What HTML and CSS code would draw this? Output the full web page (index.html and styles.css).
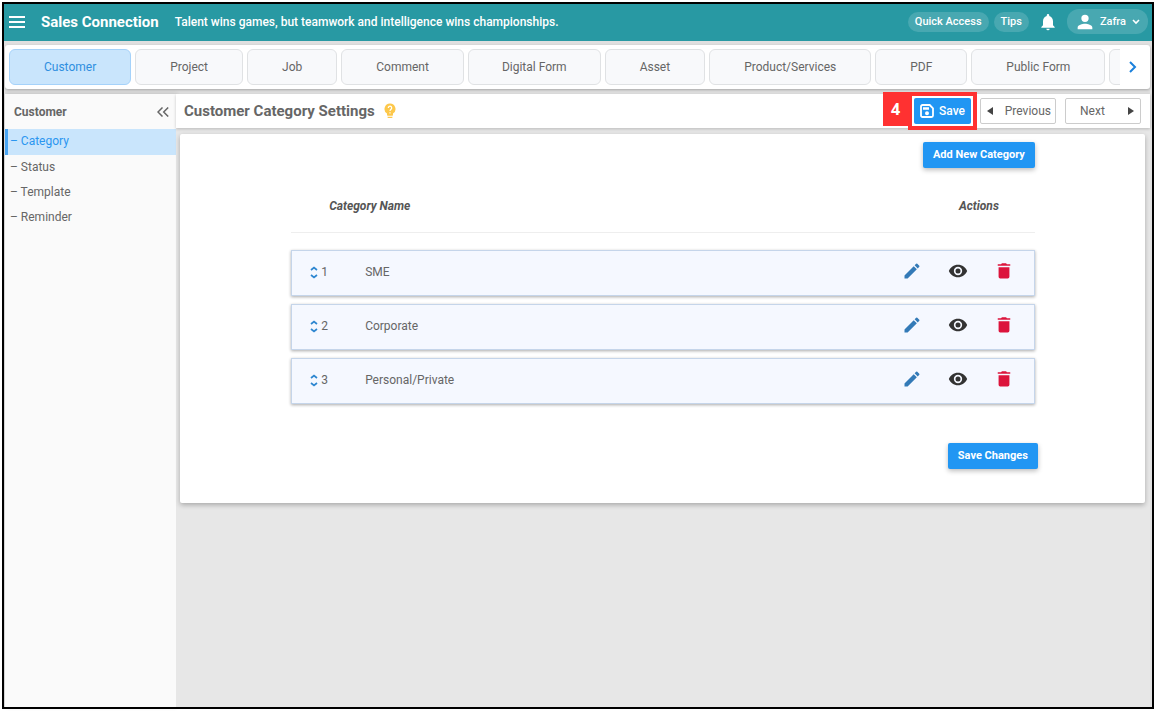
FILE: index.html
```html
<!DOCTYPE html>
<html lang="en">
<head>
<meta charset="utf-8">
<title>Customer Category Settings</title>
<link rel="stylesheet" href="styles.css">
</head>
<body>
<svg class="sprite" aria-hidden="true">
  <symbol id="pencil" viewBox="0 0 24 24"><path d="M3 17.25V21h3.75L17.81 9.94l-3.75-3.75L3 17.25zM20.71 7.04a1 1 0 0 0 0-1.41l-2.34-2.34a1 1 0 0 0-1.41 0l-1.83 1.83 3.75 3.75 1.83-1.83z"/></symbol>
  <symbol id="eye" viewBox="0 0 24 24"><path d="M12 4.5C7 4.5 2.73 7.61 1 12c1.73 4.39 6 7.5 11 7.5s9.27-3.11 11-7.5c-1.73-4.39-6-7.5-11-7.5zM12 17a5 5 0 1 1 0-10 5 5 0 0 1 0 10zm0-8a3 3 0 1 0 0 6 3 3 0 0 0 0-6z"/></symbol>
  <symbol id="trash" viewBox="0 0 24 24"><path d="M5.500 7.500V19a2 2 0 0 0 2 2h9a2 2 0 0 0 2-2V7.500zM19.500 3.800h-4l-1-1h-5l-1 1h-4v2h15z"/></symbol>
  <symbol id="sort" viewBox="0 0 8 14"><path d="M1 4 4 1.500l3 2.500M1 9l3 2.500L7 9" fill="none" stroke="currentColor" stroke-width="1.700"/></symbol>
</svg>
<div class="app">
  <header class="topbar">
    <button class="plain menu" aria-label="Menu"><svg width="16" height="12" viewBox="0 0 16 12"><path d="M0 1h16M0 6h16M0 11h16" stroke="currentColor" stroke-width="2"/></svg></button>
    <strong class="brand">Sales Connection</strong>
    <span class="tagline">Talent wins games, but teamwork and intelligence wins championships.</span>
    <div class="top-actions">
      <button class="pill">Quick Access</button>
      <button class="pill">Tips</button>
      <button class="plain bell" aria-label="Notifications"><svg width="20" height="20" viewBox="0 0 24 24"><path fill="currentColor" d="M12 22a2 2 0 0 0 2-2h-4a2 2 0 0 0 2 2zm6-6v-5c0-3.070-1.640-5.640-4.500-6.320V4a1.500 1.500 0 0 0-3 0v.68C7.630 5.360 6 7.920 6 11v5l-2 2v1h16v-1l-2-2z"/></svg></button>
      <button class="pill user"><svg width="22" height="22" viewBox="0 0 24 24"><path fill="currentColor" d="M12 12a4 4 0 1 0 0-8 4 4 0 0 0 0 8zm0 2c-2.670 0-8 1.340-8 4v2h16v-2c0-2.660-5.330-4-8-4z"/></svg>Zafra<svg class="caret" width="8" height="6" viewBox="0 0 8 6"><path d="M1 1l3 3 3-3" fill="none" stroke="currentColor" stroke-width="1.600"/></svg></button>
    </div>
  </header>

  <nav class="tabs" aria-label="Modules">
    <div class="tab-track">
      <a href="#" class="tab active">Customer</a>
      <a href="#" class="tab">Project</a>
      <a href="#" class="tab">Job</a>
      <a href="#" class="tab">Comment</a>
      <a href="#" class="tab wide">Digital Form</a>
      <a href="#" class="tab">Asset</a>
      <a href="#" class="tab">Product/Services</a>
      <a href="#" class="tab">PDF</a>
      <a href="#" class="tab">Public Form</a>
      <a href="#" class="tab" aria-label="More"></a>
    </div>
    <button class="plain scroll" aria-label="Scroll right"><svg width="10" height="12" viewBox="0 0 10 12"><path d="M2 1l5 5-5 5" fill="none" stroke="currentColor" stroke-width="2"/></svg></button>
  </nav>

  <div class="body">
    <aside class="sidebar">
      <div class="side-head"><span>Customer</span><button class="plain collapse" aria-label="Collapse"><svg width="12" height="10" viewBox="0 0 12 10"><path d="M5.500.5 1 5l4.500 4.500M11.200.5 6.700 5l4.500 4.500" fill="none" stroke="currentColor" stroke-width="1.500"/></svg></button></div>
      <nav class="side-nav" aria-label="Customer settings">
        <a href="#" class="active">– Category</a>
        <a href="#">– Status</a>
        <a href="#">– Template</a>
        <a href="#">– Reminder</a>
      </nav>
    </aside>
    <main class="main">
      <div class="page-head">
        <h1>Customer Category Settings</h1>
        <svg class="bulb" width="12" height="16" viewBox="0 0 12 16"><path fill="#fdc84b" d="M6 .5a5.500 5.500 0 0 0-3 10.100V12q0 .7.700.7h4.600q.7 0 .7-.7v-1.400A5.500 5.500 0 0 0 6 .5zM3.500 13.700h5v.5q0 .8-.8.800H4.300q-.8 0-.8-.8z"/><path d="M4.300 5a1.700 1.700 0 1 1 2.700 1.300Q6 7 6 8M6 9.200v1.300" fill="none" stroke="#fff" stroke-width="1.200"/></svg>
        <div class="head-actions">
          <div class="callout"><span class="step">4</span><div class="ring"><button class="save"><svg width="14" height="14" viewBox="0 0 14 14"><path d="M2.500 1h7.200L13 4.300v7.200a1.500 1.500 0 0 1-1.500 1.500h-9A1.500 1.500 0 0 1 1 11.500v-9A1.500 1.500 0 0 1 2.500 1z" fill="none" stroke="#fff" stroke-width="1.800"/><path d="M3 3.300h6v2.400H3zM5 9.300a2 2 0 1 0 4 0 2 2 0 0 0-4 0z" fill="#fff"/></svg>Save</button></div></div>
          <button class="step-btn"><svg width="6" height="8" viewBox="0 0 6 8"><path d="M6 0v8L0 4z" fill="#444"/></svg>Previous</button>
          <button class="step-btn next">Next<svg width="6" height="8" viewBox="0 0 6 8"><path d="M0 0v8l6-4z" fill="#444"/></svg></button>
        </div>
      </div>
      <section class="card">
        <div class="list">
          <div class="add-row"><button class="primary">Add New Category</button></div>
          <table>
            <thead><tr><th class="name-col" colspan="2">Category Name</th><th class="act-col">Actions</th></tr></thead>
            <tbody>
              <tr><td class="order"><svg width="8" height="14"><use href="#sort"/></svg>1</td><td>SME</td><td class="act-col"><div class="acts"><button class="plain edit" aria-label="Edit SME"><svg width="20" height="20"><use href="#pencil"/></svg></button><button class="plain view" aria-label="View SME"><svg width="20" height="20"><use href="#eye"/></svg></button><button class="plain del" aria-label="Delete SME"><svg width="20" height="20"><use href="#trash"/></svg></button></div></td></tr>
              <tr><td class="order"><svg width="8" height="14"><use href="#sort"/></svg>2</td><td>Corporate</td><td class="act-col"><div class="acts"><button class="plain edit" aria-label="Edit Corporate"><svg width="20" height="20"><use href="#pencil"/></svg></button><button class="plain view" aria-label="View Corporate"><svg width="20" height="20"><use href="#eye"/></svg></button><button class="plain del" aria-label="Delete Corporate"><svg width="20" height="20"><use href="#trash"/></svg></button></div></td></tr>
              <tr><td class="order"><svg width="8" height="14"><use href="#sort"/></svg>3</td><td>Personal/Private</td><td class="act-col"><div class="acts"><button class="plain edit" aria-label="Edit Personal/Private"><svg width="20" height="20"><use href="#pencil"/></svg></button><button class="plain view" aria-label="View Personal/Private"><svg width="20" height="20"><use href="#eye"/></svg></button><button class="plain del" aria-label="Delete Personal/Private"><svg width="20" height="20"><use href="#trash"/></svg></button></div></td></tr>
            </tbody>
          </table>
        </div>
        <div class="save-row"><button class="primary">Save Changes</button></div>
      </section>
    </main>
  </div>
</div>
</body>
</html>
```
FILE: styles.css
```css
* { box-sizing: border-box; }
body {
  margin: 0;
  min-height: 100vh;
  padding: 2px 2px 3px;
  display: flex;
  background: #fff;
  color: #666;
  font: 12px/16px Roboto, sans-serif;
}
button { font: inherit; color: inherit; margin: 0; cursor: pointer; }
a { color: inherit; text-decoration: none; }
svg { display: block; flex: none; fill: currentColor; }
.sprite { position: absolute; width: 0; height: 0; }
.plain { border: 0; padding: 0; background: none; display: flex; }

.app {
  flex: 1;
  min-width: 0;
  display: flex;
  flex-direction: column;
  border: 2px solid #000;
  background: #e0e0e0;
}

.topbar {
  display: flex;
  align-items: center;
  height: 37px;
  padding: 0 4px 2px 5px;
  background: #2899a3;
  color: #fff;
}
.brand { margin-left: 16px; font-size: 15px; }
.tagline { margin-left: 16px; font-weight: 500; }
.top-actions { margin-left: auto; display: flex; align-items: center; }
.pill {
  height: 20px;
  margin-right: 5px;
  padding: 0 7px;
  border: 0;
  border-radius: 12px;
  background: #48a8b1;
  font-size: 11px;
  font-weight: 500;
}
.bell { margin: 0 9px 0 4px; }
.user { display: flex; align-items: center; gap: 4px; height: 25px; margin: 0; padding: 0 8px 0 7px; }
.caret { margin-left: 2px; }

.tabs {
  display: flex;
  margin: 4px 2px 5px 1px;
  padding: 4px;
  border-radius: 3px;
  background: #fff;
  box-shadow: 0 1px 3px #0004;
}
.tab-track { flex: 1; min-width: 0; display: flex; gap: 4px; overflow: hidden; }
.tab {
  flex: none;
  height: 36px;
  padding: 0 34px;
  border: 1px solid #e0e2e4;
  border-radius: 6px;
  background: #f8f9fb;
  line-height: 34px;
}
.tab.wide { padding: 0 33px; }
.tab.active { border-color: #a5d2fa; background: #c9e5fc; color: #2f8fe0; }
.scroll { align-items: center; padding: 0 8px; color: #1a80dc; }

.body { flex: 1; display: flex; margin: 0 2px 0 1px; }
.sidebar { width: 171px; flex: none; background: #fafafa; box-shadow: 1px 0 4px #0003; }
.side-head {
  display: flex;
  align-items: center;
  justify-content: space-between;
  height: 35px;
  padding: 0 7px 0 9px;
  font-weight: 700;
}
.side-nav a { display: block; height: 25px; padding-left: 5px; line-height: 25px; }
.side-nav .active { height: 26px; padding-left: 2px; border-left: 3px solid #4aa5f3; background: #c9e5fc; color: #2b96f0; }

.main { flex: 1; min-width: 0; background: #e7e7e7; }
.page-head { display: flex; align-items: center; height: 34px; padding: 0 9px 0 8px; background: #fff; box-shadow: 0 1px 3px #0003; }
h1 { margin: 0; font-size: 15px; line-height: 20px; }
.bulb { margin-left: 9px; }
.head-actions { margin-left: auto; display: flex; align-items: center; gap: 9px; }
.callout { display: flex; align-items: flex-start; margin: -4px -6px -4px 0; color: #fff; }
.step {
  width: 25px;
  background: #ff3131;
  font: 700 16px/34px "Open Sans", sans-serif;
  text-align: center;
}
.ring { padding: 2px; border: 4px solid #ff3131; background: #fff; }
.save {
  display: flex;
  align-items: center;
  gap: 5px;
  height: 26px;
  padding: 0 6px;
  border: 0;
  border-radius: 2px;
  background: #2196f3;
  font-weight: 500;
}
.step-btn {
  display: flex;
  align-items: center;
  justify-content: space-between;
  width: 76px;
  height: 26px;
  padding: 0 4px 0 6px;
  border: 1px solid #ccc;
  border-radius: 2px;
  background: #fff;
}
.next { padding: 0 6px 0 14px; }

.card {
  margin: 6px 5px 0 4px;
  padding: 8px 11% 34px 11%;
  border-radius: 2px;
  background: #fff;
  box-shadow: 0 2px 5px #0004;
}
.list { padding: 0 3px 0 4px; }
.add-row, .save-row { display: flex; justify-content: flex-end; }
.primary {
  height: 26px;
  padding: 0 10px;
  border: 0;
  border-radius: 2px;
  background: #2196f3;
  color: #fff;
  font-size: 11px;
  font-weight: 700;
  box-shadow: 0 2px 5px #0004;
}
.save-row { margin-top: 31px; }
table { width: 100%; margin-top: 9px; border-collapse: separate; border-spacing: 0 8px; }
thead th { height: 48px; padding: 0 0 6px 38px; border-bottom: 1px solid #eee; text-align: left; font-style: italic; font-weight: 700; color: #555; }
thead .act-col { padding: 0 36px 6px 0; text-align: right; }
tbody::before { content: ""; display: block; height: 1px; }
tbody tr { box-shadow: 0 1px 3px #0005; }
td { height: 46px; padding: 0 0 2px; border: solid #c5d5ea; border-width: 1px 0; background: #f5f8ff; }
td:first-child { border-left-width: 1px; }
td:last-child { border-right-width: 1px; }
.order { width: 74px; padding-left: 18px; }
.order svg { display: inline-block; margin-right: 3px; vertical-align: middle; color: #2d86d0; }
td.act-col { width: 150px; padding-right: 20px; }
.acts { display: flex; justify-content: flex-end; gap: 26px; padding-bottom: 2px; }
.edit { color: #337ab7; }
.view { color: #333; }
.del { color: #dc143c; }
```
